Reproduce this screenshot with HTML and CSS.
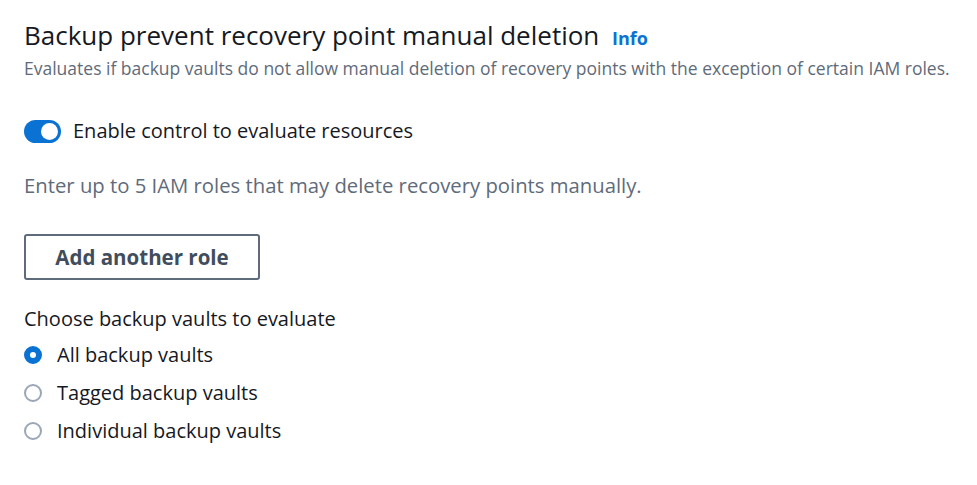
FILE: index.html
```html
<!DOCTYPE html>
<html lang="en">
<head>
<meta charset="utf-8">
<title>Backup prevent recovery point manual deletion</title>
<link rel="stylesheet" href="styles.css">
</head>
<body>
<main class="panel">
  <header class="header">
    <h2 class="title">Backup prevent recovery point manual deletion <a class="info" href="#">Info</a></h2>
    <p class="desc">Evaluates if backup vaults do not allow manual deletion of recovery points with the exception of certain IAM roles.</p>
  </header>

  <label class="toggle-row">
    <span class="toggle"><span class="knob"></span></span>
    <span class="toggle-label">Enable control to evaluate resources</span>
  </label>

  <p class="hint">Enter up to 5 IAM roles that may delete recovery points manually.</p>

  <button class="btn" type="button">Add another role</button>

  <fieldset class="radios">
    <legend class="legend">Choose backup vaults to evaluate</legend>
    <label class="radio-row"><span class="radio checked"></span><span>All backup vaults</span></label>
    <label class="radio-row"><span class="radio"></span><span>Tagged backup vaults</span></label>
    <label class="radio-row"><span class="radio"></span><span>Individual backup vaults</span></label>
  </fieldset>
</main>
</body>
</html>
```

FILE: styles.css
```css
* { box-sizing: border-box; }
html, body { margin: 0; padding: 0; background: #ffffff; }
body {
  font-family: "Open Sans", "Noto Sans", Arial, sans-serif;
  color: #16191f;
}
.panel {
  padding: 18px 24px 0 24px;
  display: flex;
  flex-direction: column;
  align-items: flex-start;
}
.header { display: flex; flex-direction: column; }
.title {
  margin: 0;
  font-size: 26px;
  font-weight: 400;
  line-height: 34px;
  color: #16191f;
}
.info {
  font-size: 18px;
  font-weight: 700;
  color: #0972d3;
  text-decoration: none;
  margin-left: 6px;
}
.desc {
  margin: 1px 0 0 0;
  font-size: 17.5px;
  line-height: 24px;
  color: #5f6b7a;
}
.toggle-row {
  margin-top: 37px;
  display: flex;
  align-items: center;
  gap: 12px;
}
.toggle {
  width: 37px;
  height: 23px;
  border-radius: 12px;
  background: #0972d3;
  display: flex;
  align-items: center;
  justify-content: flex-end;
  padding: 0 3px;
}
.knob {
  width: 17px;
  height: 17px;
  border-radius: 50%;
  background: #ffffff;
}
.toggle-label {
  font-size: 20px;
  line-height: 28px;
  color: #16191f;
}
.hint {
  margin: 26px 0 0 0;
  font-size: 20.3px;
  line-height: 28px;
  color: #5f6b7a;
}
.btn {
  margin-top: 35px;
  width: 236px;
  height: 46px;
  border: 2px solid #5f6b7a;
  border-radius: 3px;
  background: #ffffff;
  color: #414d5c;
  font-family: inherit;
  font-size: 20.5px;
  font-weight: 700;
  padding: 0;
}
.radios {
  border: 0;
  margin: 25px 0 0 0;
  padding: 0;
  display: flex;
  flex-direction: column;
  gap: 10px;
}
.legend {
  padding: 0;
  font-size: 20px;
  line-height: 28px;
  color: #16191f;
  margin-bottom: 8px;
}
.radio-row {
  display: flex;
  align-items: center;
  gap: 15px;
  font-size: 20px;
  line-height: 28px;
  color: #16191f;
}
.radio {
  width: 18px;
  height: 18px;
  border-radius: 50%;
  border: 2px solid #9ba7b6;
  background: #ffffff;
  flex: none;
}
.radio.checked {
  border: 6px solid #0972d3;
}
```
